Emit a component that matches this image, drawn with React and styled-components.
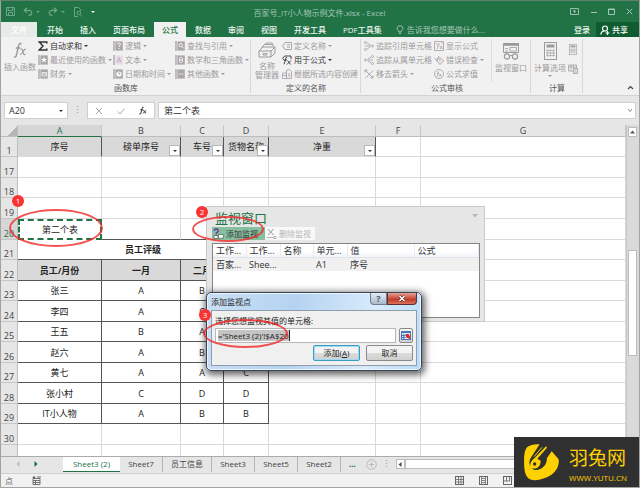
// Workbook.jsx
import React, { useState } from 'react';
import styled, { createGlobalStyle, css } from 'styled-components';

const columns = ['A', 'B', 'C', 'D', 'E', 'F', 'G'];

const emptyRows = [
  { n: 17, h: 21 },
  { n: 18, h: 20 },
  { n: 19, h: 21 },
];

const ratings = [
  { n: 23, h: 20, values: ['张三', 'A', 'B', 'A'] },
  { n: 24, h: 21, values: ['李四', 'A', 'C', 'B'] },
  { n: 25, h: 20, values: ['王五', 'B', 'A', 'A'] },
  { n: 26, h: 21, values: ['赵六', 'A', 'B', 'B'] },
  { n: 27, h: 20, values: ['黄七', 'A', 'A', 'C'] },
  { n: 28, h: 21, values: ['张小村', 'C', 'D', 'D'] },
  { n: 29, h: 20, values: ['IT小人物', 'A', 'B', 'B'] },
];

const sheets = ['Sheet3 (2)', 'Sheet7', '员工信息', 'Sheet3', 'Sheet5', 'Sheet2'];

// Icons
const Svg = ({ w = 10, h = 10, box, children }) => (
  <svg
    width={w}
    height={h}
    viewBox={box || `0 0 ${w} ${h}`}
    fill="none"
    stroke="currentColor"
    aria-hidden="true"
  >
    {children}
  </svg>
);

const BookIcon = ({ kind }) => (
  <Svg>
    <path d="M1 0v10" stroke="#aaa6aa" strokeWidth="1.4" />
    <rect x="2.4" y="0.4" width="7.4" height="9.2" fill={kind === 'text' ? '#e6dce8' : '#aaa6aa'} stroke="none" />
    {kind === 'star' && <path d="M6 2l.9 2H9L7.300 5.300 8 7.500 6 6.200 4 7.500l.7-2.200L3 4h2.100z" fill="#fff" stroke="none" />}
    {kind === 'money' && <path d="M4 3.500h4.500v3.500H4zM4 5h4.500" stroke="#f4f4f4" strokeWidth=".8" />}
    {kind === 'logic' && <path d="M4.500 3.500q0-1.400 1.500-1.400t1.500 1.300q0 .8-1.500 1.600v.8M6 7v1" stroke="#fff" />}
    {kind === 'text' && <path d="M4 7.500l2-5 2 5M4.800 6h2.500" stroke="#b9a9bd" strokeWidth=".8" />}
    {kind === 'clock' && (
      <>
        <circle cx="6" cy="5" r="2.600" fill="#fff" stroke="none" />
        <path d="M6 3.300V5h1.400" stroke="#777" strokeWidth=".7" />
      </>
    )}
    {kind === 'find' && <path d="M7.500 4.200a1.700 1.700 0 1 0-3.400 0 1.700 1.700 0 0 0 3.400 0M7 5.500l1.800 2" stroke="#fff" strokeWidth=".8" />}
    {kind === 'math' && <path d="M6 2.200c-2 0-2 5.600 0 5.600s2-5.600 0-5.600M4.600 5h2.800" stroke="#fff" strokeWidth=".8" />}
    {kind === 'more' && <path d="M4 5h.9M5.600 5h.9M7.200 5h.9" stroke="#fff" />}
  </Svg>
);

const SigmaIcon = () => (
  <Svg>
    <path d="M8.800 2.500V1H1.200L5 5 1.200 9h7.600V7.500" stroke="#333" strokeWidth="1.500" />
  </Svg>
);

const TagIcon = () => (
  <Svg>
    <path d="M3 1.500h6.500v7H3L.6 5z" strokeWidth=".9" />
    <path d="M5 3.500h3M5 5h3M5 6.500h3" strokeWidth=".6" />
  </Svg>
);

const UseFormulaIcon = () => (
  <Svg>
    <path d="M.6 3.500L2.500 1H9v3M.6 3.500L3 6M5 2.500Q3.800 2 3.600 4T2 9.300M2.500 5h2.300M5.500 5.500l3.200 4M9 5.500l-4 4" stroke="#333" strokeWidth=".9" />
  </Svg>
);

const CreateIcon = () => (
  <Svg>
    <path d="M.5 4h4v5.500h-4zM4.500 1l3-.5 2 2v7h-5zM.5 6.500h4M6 5h2.500M6 7h2.500" strokeWidth=".8" />
  </Svg>
);

const TraceIcon = ({ flip }) => (
  <Svg>
    <g transform={flip ? 'matrix(-1 0 0 1 10 0)' : undefined} strokeWidth=".8">
      <circle cx="1.500" cy="1.500" r="1" />
      <circle cx="1.500" cy="8.500" r="1" />
      <circle cx="8.500" cy="5" r="1" />
      <path d="M3 2l3.600 2.400M3 8l3.600-2.400M1 5h5" />
    </g>
  </Svg>
);

const RemoveArrowsIcon = () => (
  <Svg>
    <path d="M1 1l8 8M9 1.500L1.500 9M1 1v2.500M1 1h2.500M9 9V6.500M9 9H6.500" strokeWidth=".9" />
  </Svg>
);

const ShowFormulaIcon = () => (
  <Svg>
    <path d="M.5.500h9v9h-9zM2 2l2.500 3M5.500 2L3 8M6 5l2.500 3M8.500 5L6 8M7 2h1.500" strokeWidth=".8" />
  </Svg>
);

const CheckIcon = () => (
  <Svg>
    <path d="M.5 3l2 2.500L5 1M6 2.500L9.500 6 6 9.500 2.800 6zM6 4.500v2" strokeWidth=".9" />
  </Svg>
);

const EvaluateIcon = () => (
  <Svg>
    <circle cx="5" cy="5" r="4.500" strokeWidth=".8" />
    <path d="M5 2.500q-1 0-1.200 2T3 7.500M3 4.500h2M5.500 5l1.800 2.500M7.300 5L5.300 7.500" strokeWidth=".8" />
  </Svg>
);

const NameManagerIcon = () => (
  <Svg w={18} h={16}>
    <path d="M1 9l4-4h12l-4 4zM1 9v6h12V9M13 15l4-4V5" />
    <path d="M3.500 5.500l3-3h8l1 2M6 3l2-2h6l1 2M5 11.500h4v1.500H5z" strokeWidth=".9" />
  </Svg>
);

const WatchIcon = () => (
  <Svg w={18} h={18}>
    <path d="M1.500 1.500h15v9h-15z" />
    <path d="M1 2.500h16" strokeWidth="2.600" />
    <path d="M3 6.500h3M3 9h3M8 5.500h6.500V9H8z" strokeWidth=".8" />
    <circle cx="5" cy="14.500" r="2.600" fill="#f1f1f1" strokeWidth="1.200" />
    <circle cx="13" cy="14.500" r="2.600" fill="#f1f1f1" strokeWidth="1.200" />
    <path d="M7.500 14q1.500-1.200 3 0" />
  </Svg>
);

const CalculatorIcon = ({ w, h }) => (
  <Svg w={w} h={h} box="0 0 13 18">
    <rect x=".5" y=".5" width="12" height="17" />
    <path d="M2.500 4h8" strokeWidth="3" />
    <path d="M2.500 8.500h2M5.500 8.500h2M8.500 8.500h2M2.500 11h2M5.500 11h2M8.500 11h2M2.500 13.500h2M5.500 13.500h2M8.500 13.500h2" strokeWidth="1.600" />
  </Svg>
);

const CalcSheetIcon = () => (
  <Svg w={10} h={10}>
    <path d="M.5 1h8v6h-8zM.5 3h8M3 1v6M5.500 1v3" strokeWidth=".7" />
    <path d="M5.500 4.500h4v5h-4z" fill="#f1f1f1" strokeWidth=".8" />
    <path d="M6.500 6h2M6.500 8h2" strokeWidth=".8" />
  </Svg>
);

const FxIcon = () => (
  <Svg w={14} h={17}>
    <path d="M8.500 2.300Q6.600-.2 5.500 4L3.600 12.500Q2.900 16 .8 14.800M2.800 6h4.600" strokeWidth="1.400" />
    <path d="M7.500 7.500q1.300-1.200 2 .8l1.200 3.700q.6 1.400 1.800.2M12.800 7.200q-1.200-.4-2.600 2.300T7 12.500" strokeWidth="1.100" />
  </Svg>
);

const SmallFxIcon = () => (
  <Svg w={8} h={9}>
    <path d="M4.600 1.300Q3.400.4 3 2.800T1.900 7Q1.500 8.700.4 8M1.300 3.800h2.900M4.300 4.500q.8-.4 1.100 1t1.700 1.700M7.200 4.400Q5.800 5 4.200 7.400" stroke="#333" />
  </Svg>
);

const BulbIcon = () => (
  <Svg w={8} h={10}>
    <path d="M2.800 7V6Q1 4.800 1 3.300 1.200.8 4 .8t3 2.500Q7 4.800 5.200 6v1zM3 8.500h2" strokeWidth=".9" />
  </Svg>
);

const UserIcon = () => (
  <Svg w={10} h={10}>
    <circle cx="5" cy="3.500" r="2.500" strokeWidth="1.200" />
    <path d="M.8 9.500Q1 6.500 4 6M7.500 6v4M5.500 8h4" strokeWidth="1.200" />
  </Svg>
);

const SaveIcon = () => (
  <Svg w={9} h={9}>
    <path d="M.5.500h8v8h-8zM2.200.500v3h4.600v-3M2.500 8.500v-3h4v3" />
  </Svg>
);

const UndoIcon = ({ flip }) => (
  <Svg w={10} h={9}>
    <g transform={flip ? 'matrix(-1 0 0 1 10 0)' : undefined}>
      <path d="M4 .8L1.200 3.300 4 5.800M1.200 3.300H6q2.800.2 2.800 2.600T5.500 8.300" strokeWidth="1.200" />
    </g>
  </Svg>
);

const PreviewIcon = () => (
  <Svg w={10} h={10}>
    <path d="M5 9.500H1.500v-9h4l2 2V4" />
    <circle cx="5.800" cy="6" r="1.800" />
    <path d="M7 7.500l2 2" />
  </Svg>
);

const GridViewIcon = ({ kind }) => (
  <Svg w={9} h={9}>
    <rect x=".5" y=".5" width="8" height="8" />
    {kind === 'normal' && <path d="M3.500.500v8M6 .500v8M.5 3.500h8M.5 6h8" strokeWidth=".8" />}
    {kind === 'page' && <path d="M2.500 1v7M6.500 1v7M3 2.500h3M3 4.500h3M3 6.500h3" strokeWidth=".8" />}
    {kind === 'break' && <path d="M.5 5h6V.500M3.500.500V5" strokeWidth=".9" />}
  </Svg>
);

const MacroIcon = () => (
  <Svg w={9} h={9}>
    <path d="M1 2.500h7v6H1zM1 4.500h7M3.500 4.500v4M1 6.500h7" strokeWidth=".9" />
    <circle cx="2" cy="1.500" r="1.300" fill="currentColor" stroke="none" />
    <path d="M5 1h4" />
  </Svg>
);

const AddWatchIcon = () => (
  <Svg w={11} h={11}>
    <path d="M1 2.800Q1.500.8 3.500 1t1.800 2Q5 4.200 3.300 5v1.500" stroke="#7030a0" strokeWidth="1.300" />
    <path d="M1 7.500h4v3H1zM5.500 6.500h4.800v3.800H5.500z" fill="#fff" stroke="#50705c" strokeWidth=".8" />
  </Svg>
);

const DeleteWatchIcon = () => (
  <Svg w={11} h={11}>
    <path d="M2 1l5.500 6M7.500 1L2 7" stroke="#999" />
    <path d="M.8 9.500h6M7.500 8.500h2.500v2H7.500z" stroke="#b5b5b5" />
  </Svg>
);

const PickerIcon = () => (
  <Svg w={10} h={9}>
    <rect x=".5" y=".5" width="9" height="8" fill="#dfe9f8" stroke="#4a76c0" />
    <path d="M0 1.500h10M.5 4.500h4M2.800 3v5.500M.5 6.500h4" stroke="#4a76c0" />
    <path d="M5 3.500h2.500L9 7.500 5.500 6z" fill="#d6281e" stroke="#d6281e" />
  </Svg>
);

const RabbitLogo = () => (
  <svg width="35" height="37" viewBox="0 0 105 111" aria-hidden="true">
    <path d="M9 10C18 2 32 0 47 1L20 42C13 54 15 70 30 77C50 81 69 66 69 42L83 22L104 46C108 78 80 105 33 109C12 108 3 96 1 72C-1 42 0 20 9 10Z" fill="#ffd100" />
    <path d="M66 7L32 42C20 50 16 62 20 72C40 78 50 66 50 50L40 44L69 11Z" fill="#ffd100" />
    <path d="M54 10L30 38" stroke="#ffd100" strokeWidth="3" />
    <circle cx="32" cy="60" r="5" fill="#303030" />
  </svg>
);

const Item = ({ icon, label, arrow, on }) => (
  <RibbonItem type="button" $on={on}>
    {icon}
    <span>{label}</span>
    {arrow && <Caret />}
  </RibbonItem>
);

const Workbook = () => {
  const [cellName, setCellName] = useState('A20');
  const [formula, setFormula] = useState('第二个表');
  const [watchRef, setWatchRef] = useState("='Sheet3 (2)'!$A$20");

  return (
    <Window>
      <GlobalStyle />
      <TitleBar>
        <QuickAccess>
          <IconButton type="button" aria-label="保存"><SaveIcon /></IconButton>
          <IconButton type="button" aria-label="撤消"><UndoIcon /><Caret /></IconButton>
          <IconButton type="button" aria-label="恢复"><UndoIcon flip /><Caret /></IconButton>
          <IconButton type="button" aria-label="打印预览"><PreviewIcon /></IconButton>
          <IconButton type="button" aria-label="自定义" $bright><Caret /></IconButton>
        </QuickAccess>
        <FileName>百家号_IT小人物示例文件.xlsx - Excel</FileName>
        <WindowButtons>
          <IconButton type="button" aria-label="功能区显示选项">
            <Svg w={9} h={7}><path d="M.5.500h8v6h-8zM4.500 5V2.500M3 3.500l1.500-1.200L6 3.500" strokeWidth=".9" /></Svg>
          </IconButton>
          <IconButton type="button" aria-label="最小化"><Svg w={7} h={7}><path d="M1 4.500h6" /></Svg></IconButton>
          <IconButton type="button" aria-label="最大化"><Svg w={7} h={7}><path d="M.5 1h6v5.500h-6zM.5 1.500h6" /></Svg></IconButton>
          <IconButton type="button" aria-label="关闭"><Svg w={7} h={7}><path d="M.8.800l5.400 5.400M6.200.800L.8 6.200" /></Svg></IconButton>
        </WindowButtons>
      </TitleBar>

      <MenuTabs>
        <FileTab type="button">文件</FileTab>
        <MenuTab type="button">开始</MenuTab>
        <MenuTab type="button">插入</MenuTab>
        <MenuTab type="button">页面布局</MenuTab>
        <MenuTab type="button" $active>公式</MenuTab>
        <MenuTab type="button">数据</MenuTab>
        <MenuTab type="button">审阅</MenuTab>
        <MenuTab type="button">视图</MenuTab>
        <MenuTab type="button">开发工具</MenuTab>
        <MenuTab type="button">PDF工具集</MenuTab>
        <TellMe type="button"><BulbIcon />告诉我您想要做什么...</TellMe>
        <SignIn href="#signin">登录</SignIn>
        <Share type="button"><UserIcon />共享</Share>
      </MenuTabs>

      <Ribbon>
        <Group $cols="36px 75px 62px auto" $width={250}>
          <BigButton type="button"><FxIcon /><span>插入函数</span></BigButton>
          <ItemColumn>
            <Item icon={<SigmaIcon />} label="自动求和" arrow on />
            <Item icon={<BookIcon kind="star" />} label="最近使用的函数" arrow />
            <Item icon={<BookIcon kind="money" />} label="财务" arrow />
          </ItemColumn>
          <ItemColumn>
            <Item icon={<BookIcon kind="logic" />} label="逻辑" arrow />
            <Item icon={<BookIcon kind="text" />} label="文本" arrow />
            <Item icon={<BookIcon kind="clock" />} label="日期和时间" arrow />
          </ItemColumn>
          <ItemColumn>
            <Item icon={<BookIcon kind="find" />} label="查找与引用" arrow />
            <Item icon={<BookIcon kind="math" />} label="数学和三角函数" arrow />
            <Item icon={<BookIcon kind="more" />} label="其他函数" arrow />
          </ItemColumn>
          <GroupLabel>函数库</GroupLabel>
        </Group>
        <Group $cols="30px auto" $width={110}>
          <BigButton type="button"><NameManagerIcon /><span>名称<br />管理器</span></BigButton>
          <ItemColumn>
            <Item icon={<TagIcon />} label="定义名称" arrow />
            <Item icon={<UseFormulaIcon />} label="用于公式" arrow on />
            <Item icon={<CreateIcon />} label="根据所选内容创建" />
          </ItemColumn>
          <GroupLabel>定义的名称</GroupLabel>
        </Group>
        <Group $cols="70px 57px auto" $width={170} $indent={3}>
          <ItemColumn>
            <Item icon={<TraceIcon />} label="追踪引用单元格" />
            <Item icon={<TraceIcon flip />} label="追踪从属单元格" />
            <Item icon={<RemoveArrowsIcon />} label="移去箭头" arrow />
          </ItemColumn>
          <ItemColumn>
            <Item icon={<ShowFormulaIcon />} label="显示公式" />
            <Item icon={<CheckIcon />} label="错误检查" arrow />
            <Item icon={<EvaluateIcon />} label="公式求值" />
          </ItemColumn>
          <BigButton type="button" $divided><WatchIcon /><span>监视窗口</span></BigButton>
          <GroupLabel>公式审核</GroupLabel>
        </Group>
        <Group $cols="36px auto" $width={52}>
          <BigButton type="button"><CalculatorIcon w={13} h={18} /><span>计算选项</span><Caret /></BigButton>
          <CalcColumn>
            <IconButton type="button" aria-label="开始计算"><CalculatorIcon w={8} h={11} /></IconButton>
            <IconButton type="button" aria-label="计算工作表"><CalcSheetIcon /></IconButton>
          </CalcColumn>
          <GroupLabel>计算</GroupLabel>
        </Group>
        <Collapse type="button" aria-label="折叠功能区">
          <Svg w={7} h={5}><path d="M1 4l2.500-2.500L6 4" stroke="#444" strokeWidth="1.200" /></Svg>
        </Collapse>
      </Ribbon>

      <FormulaBar>
        <NameBox>
          <input aria-label="名称框" value={cellName} onChange={(e) => setCellName(e.target.value)} />
          <Caret />
        </NameBox>
        <Grip>⋮</Grip>
        <FormulaTools>
          <IconButton type="button" aria-label="取消"><Svg w={8} h={8}><path d="M1 1l6 6M7 1L1 7" stroke="#aaa" /></Svg></IconButton>
          <IconButton type="button" aria-label="输入"><Svg w={8} h={8}><path d="M.5 4.500l2.500 2.500L7.500 1.500" stroke="#aaa" /></Svg></IconButton>
          <IconButton type="button" aria-label="插入函数"><SmallFxIcon /></IconButton>
        </FormulaTools>
        <FormulaBox>
          <input aria-label="编辑栏" value={formula} onChange={(e) => setFormula(e.target.value)} />
          <Svg w={6} h={5}><path d="M1 1l2 2.500L5 1" stroke="#888" /></Svg>
        </FormulaBox>
      </FormulaBar>

      <SheetArea>
        <GridClip>
          <Grid>
            <colgroup>
              <Col $w={17} />
              <Col $w={84} />
              <Col $w={79} />
              <Col $w={43} />
              <Col $w={45} />
              <Col $w={107} />
              <Col $w={45} />
              <col />
            </colgroup>
            <thead>
              <Row $h={12}>
                <CornerCell aria-label="全选" />
                {columns.map((c) => (
                  <ColumnHead key={c} scope="col" $active={c === 'A'}>{c}</ColumnHead>
                ))}
              </Row>
            </thead>
            <tbody>
              <Row $h={20}>
                <RowHead scope="row">1</RowHead>
                <Cell $filled $ruled="right">序号</Cell>
                {['磅单序号', '车号', '货物名称', '净重'].map((t) => (
                  <Cell key={t} $filled $ruled="right">
                    {t}
                    <FilterButton type="button" aria-label={`筛选${t}`}><Caret $dark /></FilterButton>
                  </Cell>
                ))}
                <Cell />
                <Cell />
              </Row>
              {emptyRows.map(({ n, h }) => (
                <Row key={n} $h={h}>
                  <RowHead scope="row">{n}</RowHead>
                  {columns.map((c) => <Cell key={c} />)}
                </Row>
              ))}
              <Row $h={21}>
                <RowHead scope="row" $active>20</RowHead>
                <Cell $copied>第二个表</Cell>
                <Cell $ruled="bottom" />
                <Cell $ruled="bottom" />
                <Cell $ruled="bottom" />
                <Cell />
                <Cell />
                <Cell />
              </Row>
              <Row $h={20}>
                <RowHead scope="row">21</RowHead>
                <Cell colSpan={4} $ruled="both" $bold>员工评级</Cell>
                <Cell />
                <Cell />
                <Cell />
              </Row>
              <Row $h={21}>
                <RowHead scope="row">22</RowHead>
                {['员工/月份', '一月', '二月', '三月'].map((t) => (
                  <Cell key={t} $filled $ruled="both" $bold>{t}</Cell>
                ))}
                <Cell />
                <Cell />
                <Cell />
              </Row>
              {ratings.map(({ n, h, values }) => (
                <Row key={n} $h={h}>
                  <RowHead scope="row">{n}</RowHead>
                  {values.map((v, i) => <Cell key={i} $ruled="both">{v}</Cell>)}
                  <Cell />
                  <Cell />
                  <Cell />
                </Row>
              ))}
              <Row $h={21}>
                <RowHead scope="row">30</RowHead>
                {columns.map((c) => <Cell key={c} />)}
              </Row>
              <Row $h={21}>
                <RowHead scope="row" />
                {columns.map((c) => <Cell key={c} />)}
              </Row>
            </tbody>
          </Grid>
        </GridClip>
        <VerticalScroll>
          <ScrollButton type="button" aria-label="向上滚动">
            <Svg w={5} h={4}><path d="M0 3.500h5L2.500.500z" fill="#555" stroke="none" /></Svg>
          </ScrollButton>
          <VerticalThumb />
        </VerticalScroll>
      </SheetArea>

      <SheetBar>
        <SheetNav>
          <Svg w={4} h={6}><path d="M3.500 0v6L.5 3z" fill="#c0c0c0" stroke="none" /></Svg>
          <Svg w={4} h={6}><path d="M.5 0v6l3-3z" fill="#0e6b36" stroke="none" /></Svg>
        </SheetNav>
        {sheets.map((name, i) => (
          <SheetTab key={name} type="button" $active={i === 0}>{name}</SheetTab>
        ))}
        <MoreSheets type="button" aria-label="更多工作表">...</MoreSheets>
        <IconButton type="button" aria-label="新工作表">
          <Svg w={11} h={11}><circle cx="5.500" cy="5.500" r="4.800" stroke="#bbb" /><path d="M3 5.500h5M5.500 3v5" stroke="#bbb" /></Svg>
        </IconButton>
        <Grip>⋮</Grip>
        <HorizontalScroll>
          <ScrollButton type="button" aria-label="向左滚动">
            <Svg w={4} h={5}><path d="M3.500 0v5L.5 2.500z" fill="#444" stroke="none" /></Svg>
          </ScrollButton>
          <HorizontalThumb />
        </HorizontalScroll>
      </SheetBar>

      <StatusBar>
        <span>点</span>
        <MacroIcon />
        <ViewButtons>
          <IconButton type="button" aria-label="普通"><GridViewIcon kind="normal" /></IconButton>
          <IconButton type="button" aria-label="页面布局"><GridViewIcon kind="page" /></IconButton>
          <IconButton type="button" aria-label="分页预览"><GridViewIcon kind="break" /></IconButton>
        </ViewButtons>
      </StatusBar>

      <WatchWindow>
        <WatchTitle>
          监视窗口
          <Svg w={6} h={4}><path d="M0 0h6L3 3.500z" fill="#b5b5b5" stroke="none" /></Svg>
        </WatchTitle>
        <WatchTools>
          <WatchButton type="button" $primary><AddWatchIcon />添加监视</WatchButton>
          <WatchButton type="button"><DeleteWatchIcon />删除监视</WatchButton>
        </WatchTools>
        <WatchList>
          <WatchTable>
            <colgroup>
              <Col $w={33} />
              <Col $w={34} />
              <Col $w={33} />
              <Col $w={34} />
              <Col $w={67} />
              <col />
            </colgroup>
            <thead>
              <tr>
                <th>工作...</th>
                <th>工作...</th>
                <th>名称</th>
                <th>单元...</th>
                <th>值</th>
                <th>公式</th>
              </tr>
            </thead>
            <tbody>
              <tr>
                <td>百家...</td>
                <td>Shee...</td>
                <td />
                <td>A1</td>
                <td>序号</td>
                <td />
              </tr>
            </tbody>
          </WatchTable>
        </WatchList>
      </WatchWindow>

      <Dialog role="dialog" aria-label="添加监视点">
        <DialogTitle>
          <span>添加监视点</span>
          <HelpButton type="button" aria-label="帮助">?</HelpButton>
          <CloseButton type="button" aria-label="关闭">
            <Svg w={8} h={7}><path d="M1.500 1l5 5M6.500 1l-5 5" stroke="#5a2a26" strokeWidth="2.600" /><path d="M1.500 1l5 5M6.500 1l-5 5" stroke="#fff" strokeWidth="1.500" /></Svg>
          </CloseButton>
        </DialogTitle>
        <DialogBody>
          <label htmlFor="watch-ref">选择您想监视其值的单元格:</label>
          <RefRow>
            <RefInput>
              <input id="watch-ref" value={watchRef} onChange={(e) => setWatchRef(e.target.value)} />
            </RefInput>
            <PickerButton type="button" aria-label="选择区域"><PickerIcon /></PickerButton>
          </RefRow>
          <DialogActions>
            <DialogButton type="button" $primary>添加(<u>A</u>)</DialogButton>
            <DialogButton type="button">取消</DialogButton>
          </DialogActions>
        </DialogBody>
      </Dialog>

      <Ring $x={9} $y={209} $w={94} $h={38} />
      <Ring $x={192} $y={216} $w={72} $h={26} />
      <Ring $x={203} $y={319} $w={85} $h={29} />
      <Step $x={12} $y={195}>1</Step>
      <Step $x={196} $y={206}>2</Step>
      <Step $x={199} $y={309}>3</Step>

      <Watermark>
        <RabbitLogo />
        <Brand>
          <strong>羽兔网</strong>
          <span>WWW.YUTU.CN</span>
        </Brand>
      </Watermark>
    </Window>
  );
};

export default Workbook;

// Styled Components
const GlobalStyle = createGlobalStyle`
  * {
    box-sizing: border-box;
  }

  body {
    margin: 0;
    font-family: "Open Sans", "Noto Sans CJK SC", sans-serif;
    font-size: 8px;
    line-height: 12px;
    color: #333;
  }

  button, input {
    margin: 0;
    padding: 0;
    border: none;
    background: none;
    font: inherit;
    color: inherit;
    outline: none;
  }

  button {
    white-space: nowrap;
  }

  svg {
    display: block;
    flex: none;
  }
`;

const Window = styled.div`
  position: relative;
  display: flex;
  flex-direction: column;
  height: 100vh;
  overflow: hidden;
  border: 1px solid #a3a3a3;
  border-top-color: #5f7f6c;
  background: #e6e6e6;
`;

const Caret = styled.i`
  display: block;
  flex: none;
  border: 2px solid transparent;
  border-top-color: ${({ $dark }) => ($dark ? '#333' : 'currentColor')};
  border-bottom-width: 0;
`;

const IconButton = styled.button`
  display: flex;
  align-items: center;
  justify-content: center;
  gap: 3px;
  color: ${({ $bright }) => ($bright ? '#fff' : 'inherit')};
`;

const TitleBar = styled.header`
  display: grid;
  grid-template-columns: 1fr auto 1fr;
  align-items: center;
  height: 21px;
  padding: 0 6px 0 5px;
  background: #217346;
  color: #6da586;
`;

const QuickAccess = styled.div`
  display: flex;
  align-items: center;
  gap: 8px;
`;

const FileName = styled.span`
  padding-top: 2px;
  color: #a6c7b5;
`;

const WindowButtons = styled.div`
  display: flex;
  align-items: center;
  justify-content: flex-end;
  gap: 11px;
  color: #a6c7b5;
`;

const MenuTabs = styled.nav`
  display: flex;
  height: 15px;
  background: #217346;
  color: #fff;
`;

const MenuTab = styled.button`
  margin-left: 1px;
  padding: 0 8px;
  font-weight: 500;
  background: ${({ $active }) => ($active ? '#f1f1f1' : 'transparent')};
  color: ${({ $active }) => ($active ? '#217346' : '#eef6f1')};
`;

const FileTab = styled(MenuTab)`
  width: 36px;
  margin-left: 0;
  margin-right: 1px;
  background: #e6ebe8;
  color: #fff;
`;

const TellMe = styled.button`
  display: flex;
  align-items: center;
  gap: 3px;
  margin-left: 6px;
  color: #a6c7b5;
`;

const SignIn = styled.a`
  margin-left: auto;
  padding: 2px 6px 0 0;
  font-weight: 500;
  color: #eef6f1;
  text-decoration: none;
`;

const Share = styled.button`
  display: flex;
  align-items: center;
  gap: 2px;
  width: 43px;
  padding-left: 4px;
  background: #0e5c2f;
  font-weight: 500;
  color: #fff;
`;

const Ribbon = styled.section`
  display: flex;
  flex: none;
  height: 59px;
  padding: 2px 0;
  border-bottom: 1px solid #d2d2d2;
  background: #f1f1f1;
  color: #9c9a9c;
`;

const Group = styled.div`
  display: grid;
  grid-template-columns: ${({ $cols }) => $cols};
  grid-template-rows: 43px 12px;
  flex: none;
  width: ${({ $width }) => $width}px;
  padding-left: ${({ $indent }) => $indent || 1}px;
  border-right: 1px solid #d8d8d8;
`;

const GroupLabel = styled.div`
  grid-column: 1 / -1;
  text-align: center;
  color: #555;
`;

const ItemColumn = styled.div`
  display: grid;
  grid-auto-rows: 14px;
  align-content: start;
  justify-items: start;
`;

const RibbonItem = styled.button`
  display: flex;
  align-items: center;
  gap: 2px;
  color: ${({ $on }) => ($on ? '#333' : 'inherit')};

  svg {
    color: #a29ea2;
  }
`;

const BigButton = styled.button`
  display: flex;
  flex-direction: column;
  align-items: center;
  gap: 3px;
  padding-top: 3px;
  line-height: 9px;
  border-left: ${({ $divided }) => ($divided ? '1px solid #dcdcdc' : 'none')};
`;

const CalcColumn = styled.div`
  display: grid;
  grid-auto-rows: 20px;
  align-content: start;
  justify-content: start;
`;

const Collapse = styled.button`
  align-self: flex-end;
  margin-left: auto;
  padding: 3px 5px;
`;

const FormulaBar = styled.div`
  display: flex;
  flex: none;
  height: 29px;
  padding: 6px 3px;
  line-height: 15px;
  font-size: 9px;
`;

const barBox = css`
  display: flex;
  align-items: center;
  border: 1px solid #cfcfcf;
  background: #fff;
`;

const NameBox = styled.div`
  ${barBox}
  width: 64px;
  padding: 0 4px;

  input {
    flex: 1;
    min-width: 0;
  }
`;

const Grip = styled.span`
  width: 19px;
  text-align: center;
  font-size: 9px;
  color: #999;
`;

const FormulaTools = styled.div`
  ${barBox}
  justify-content: space-around;
  width: 68px;
  margin-right: 3px;
`;

const FormulaBox = styled.div`
  ${barBox}
  flex: 1;
  padding: 0 2px 0 5px;

  input {
    flex: 1;
    min-width: 0;
  }
`;

const SheetArea = styled.main`
  display: flex;
  flex: 1;
  min-height: 0;
  overflow: hidden;
`;

const GridClip = styled.div`
  flex: 1;
  min-width: 0;
  overflow: hidden;
`;

const Grid = styled.table`
  width: 100%;
  table-layout: fixed;
  border-collapse: separate;
  border-spacing: 0;
  background: #fff;
  font-size: 9px;
  line-height: 11px;
  color: #222;

  th, td {
    padding: 0;
  }
`;

const Col = styled.col`
  width: ${({ $w }) => $w}px;
`;

const Row = styled.tr`
  height: ${({ $h }) => $h}px;
`;

const headCell = css`
  background: ${({ $active }) => ($active ? '#d6d6d6' : '#e6e6e6')};
  color: ${({ $active }) => ($active ? '#217346' : '#444')};
  font-weight: 400;
`;

const CornerCell = styled.td`
  border-right: 1px solid #bdbdbd;
  border-bottom: 1px solid #bdbdbd;
  background: linear-gradient(135deg, #e6e6e6 65%, #b5b5b5 65%);
`;

const ColumnHead = styled.th`
  ${headCell}
  border-right: 1px solid #c6c6c6;
  border-bottom: 1px solid ${({ $active }) => ($active ? '#217346' : '#bdbdbd')};
`;

const RowHead = styled.th`
  ${headCell}
  vertical-align: bottom;
  border-right: 1px solid #bdbdbd;
  border-bottom: 1px solid #c6c6c6;
`;

const lineColor = (side) => ({ $ruled }) =>
  $ruled === side || $ruled === 'both' ? '#555' : '#d9d9d9';

const Cell = styled.td`
  position: relative;
  overflow: hidden;
  text-align: center;
  white-space: nowrap;
  font-weight: ${({ $bold }) => ($bold ? 700 : 400)};
  background: ${({ $filled }) => ($filled ? '#d9d9d9' : '#fff')};
  border-right: 1px solid ${lineColor('right')};
  border-bottom: 1px solid ${lineColor('bottom')};
  ${({ $copied }) => $copied && css`
    border: 2px dashed #217346;
  `}
`;

const FilterButton = styled.button`
  position: absolute;
  right: 0;
  bottom: 0;
  display: flex;
  align-items: center;
  justify-content: center;
  width: 11px;
  height: 11px;
  border: 1px solid #b4b8c0;
  background: #fff;
`;

const VerticalScroll = styled.div`
  display: flex;
  flex-direction: column;
  width: 13px;
  padding: 2px 2px 0 1px;
  background: #dadada;
  border-left: 1px solid #c6c6c6;
`;

const ScrollButton = styled.button`
  display: flex;
  flex: none;
  align-items: center;
  justify-content: center;
  width: 9px;
  height: 10px;
  border: 1px solid #bcbcbc;
  background: #fff;
`;

const VerticalThumb = styled.div`
  height: 106px;
  margin-top: 113px;
  border: 1px solid #bcbcbc;
  background: #fff;
`;

const SheetBar = styled.div`
  display: flex;
  flex: none;
  align-items: center;
  height: 18px;
  padding-bottom: 2px;
  border-top: 1px solid #ababab;
  border-bottom: 1px solid #cfcfcf;
`;

const SheetNav = styled.div`
  display: flex;
  justify-content: center;
  gap: 14px;
  width: 62px;
  padding-right: 10px;
`;

const SheetTab = styled.button`
  min-width: 43px;
  height: 15px;
  padding: 0 8px;
  border-right: 1px solid #b5b5b5;
  color: #444;
  ${({ $active }) => $active && css`
    min-width: 57px;
    border-right: none;
    border-bottom: 1px solid #217346;
    background: #fff;
    color: #217346;
  `}
`;

const MoreSheets = styled.button`
  padding: 0 10px 0 8px;
  font-weight: 700;
  color: #217346;
`;

const HorizontalScroll = styled.div`
  display: flex;
  flex: 1;
  height: 10px;
`;

const HorizontalThumb = styled.div`
  flex: 1;
  border: 1px solid #bcbcbc;
  background: #fff;
`;

const StatusBar = styled.footer`
  display: flex;
  flex: none;
  align-items: center;
  gap: 19px;
  height: 13px;
  padding-left: 4px;
  background: #f1f1f1;
  color: #666;
`;

const ViewButtons = styled.div`
  display: flex;
  gap: 15px;
  margin-left: auto;
  padding-right: 127px;
`;

const WatchWindow = styled.section`
  position: absolute;
  left: 205px;
  top: 205px;
  width: 279px;
  height: 116px;
  padding: 2px 4px 4px 5px;
  border: 1px solid #c9c9c9;
  background: #e6e6e6;
`;

const WatchTitle = styled.h2`
  display: flex;
  justify-content: space-between;
  margin: 0;
  padding: 0 2px 0 3px;
  font-size: 13px;
  line-height: 18px;
  font-weight: 400;
  color: #217346;

  svg {
    margin-top: 5px;
  }
`;

const WatchTools = styled.div`
  display: flex;
  margin-bottom: 3px;
`;

const WatchButton = styled.button`
  display: flex;
  align-items: center;
  gap: 2px;
  height: 13px;
  padding: 0 4px 0 1px;
  background: ${({ $primary }) => ($primary ? '#86bfa0' : '#f8f8f8')};
  color: ${({ $primary }) => ($primary ? '#333' : '#b5b5b5')};

  &:first-child {
    width: 53px;
  }
`;

const WatchList = styled.div`
  height: 75px;
  border: 1px solid #858585;
  background: #fff;
`;

const WatchTable = styled.table`
  width: 100%;
  table-layout: fixed;
  border-collapse: collapse;
  font-size: 9px;
  line-height: 13px;

  th, td {
    padding: 0 0 0 3px;
    font-weight: 400;
    text-align: left;
    white-space: nowrap;
  }

  th {
    border-right: 1px solid #e8ebf0;
    border-bottom: 1px solid #dfe3e8;
    background: linear-gradient(#fff 50%, #f1f4f8);
  }

  td {
    background: #f1f1f1;
  }
`;

const Dialog = styled.section`
  position: absolute;
  left: 205px;
  top: 291px;
  width: 216px;
  height: 79px;
  padding: 0 4px 4px;
  border: 1px solid #3b4654;
  border-radius: 5px;
  background: linear-gradient(100deg, #c9dff4, #b5d3f1 40%, #d8ebfb 75%, #b9dcf9);
  box-shadow: inset 0 0 0 1px #eaf5ff, 1px 2px 7px 2px rgba(0, 0, 0, 0.6);
`;

const DialogTitle = styled.div`
  display: flex;
  align-items: flex-start;
  color: #222;

  span {
    margin-right: auto;
    line-height: 17px;
  }
`;

const HelpButton = styled.button`
  width: 17px;
  height: 12px;
  border: 1px solid #6f7f93;
  border-top: none;
  border-radius: 0 0 0 4px;
  background: linear-gradient(#e4edf6, #a9bacb);
  font-size: 9px;
  line-height: 10px;
  font-weight: 700;
  color: #4c5a6b;
`;

const CloseButton = styled.button`
  display: flex;
  align-items: center;
  justify-content: center;
  width: 30px;
  height: 12px;
  border: 1px solid #5d2f2d;
  border-top: none;
  border-radius: 0 0 4px 0;
  background: linear-gradient(#e3a298, #cb4c39 50%, #b93220 50%, #d9735c);
`;

const DialogBody = styled.div`
  padding: 4px 3px;
  border: 1px solid #8f9dad;
  background: #f0f0f0;
  color: #222;

  label {
    display: block;
    margin-bottom: 1px;
  }
`;

const RefRow = styled.div`
  display: flex;
  gap: 3px;
  margin-bottom: 2px;
`;

const RefInput = styled.div`
  flex: 1;
  height: 15px;
  padding: 1px 2px;
  border: 1px solid #b4b8bd;
  background: #fff;

  input {
    display: block;
    width: 72px;
    height: 11px;
    background: #c4c4c4;
    border-right: 1px solid #222;
  }
`;

const dialogControl = css`
  border: 1px solid #8a8a8a;
  border-radius: 2px;
  background: linear-gradient(#f3f3f3 50%, #dcdcdc 50%, #d0d0d0);
`;

const PickerButton = styled.button`
  ${dialogControl}
  display: flex;
  align-items: center;
  justify-content: center;
  width: 14px;
`;

const DialogActions = styled.div`
  display: flex;
  justify-content: flex-end;
  gap: 6px;
`;

const DialogButton = styled.button`
  ${dialogControl}
  width: 47px;
  height: 16px;
  border-color: ${({ $primary }) => ($primary ? '#3c9dc4' : '#8a8a8a')};
  box-shadow: ${({ $primary }) => ($primary ? 'inset 0 0 0 1px #9fdcf3' : 'none')};
`;

const Ring = styled.div`
  position: absolute;
  left: ${({ $x }) => $x - 1}px;
  top: ${({ $y }) => $y - 1}px;
  width: ${({ $w }) => $w}px;
  height: ${({ $h }) => $h}px;
  border: 2px solid rgba(240, 40, 40, 0.8);
  border-radius: 50%;
  pointer-events: none;
`;

const Step = styled.span`
  position: absolute;
  left: ${({ $x }) => $x - 1}px;
  top: ${({ $y }) => $y - 1}px;
  width: 12px;
  border-radius: 50%;
  background: #fb3232;
  text-align: center;
  color: #fff;
`;

const Watermark = styled.aside`
  position: absolute;
  right: -1px;
  bottom: -1px;
  display: flex;
  align-items: center;
  gap: 10px;
  width: 126px;
  height: 51px;
  padding-left: 10px;
  background: #303030;
`;

const Brand = styled.div`
  padding-top: 2px;
  color: #ffd100;

  strong {
    display: block;
    font-size: 19px;
    line-height: 28px;
    font-weight: 400;
  }

  span {
    display: block;
    font-size: 8px;
  }
`;
